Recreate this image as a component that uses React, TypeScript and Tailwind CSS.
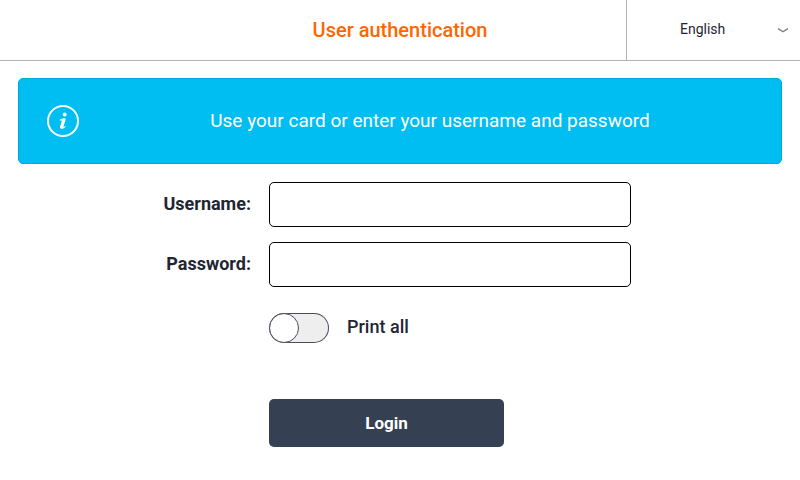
import React, { useState } from 'react';

interface FieldProps {
  id: string;
  label: string;
  type: string;
  value: string;
  onChange: (value: string) => void;
}

const Field: React.FC<FieldProps> = ({ id, label, type, value, onChange }) => (
  <div className="flex">
    <label htmlFor={id} className="w-[251px] pt-[8px] text-right text-[18px] leading-[27px] font-bold">
      {label}:
    </label>
    <input
      id={id}
      type={type}
      value={value}
      onChange={(e) => onChange(e.target.value)}
      className="ml-[18px] h-[45px] w-[362px] rounded-[5px] border border-black bg-white px-3 outline-none"
    />
  </div>
);

const InfoIcon = () => (
  <svg className="h-8 w-8 shrink-0" viewBox="0 0 32 32" fill="none">
    <circle cx="16" cy="16" r="15" stroke="#fff" strokeWidth="2" />
    <circle cx="17.7" cy="9.5" r="1.9" fill="#fff" />
    <path
      d="M12.7 14.7C14.2 13.9 15.9 13.3 17.3 13.3c1.1 0 1.5.7 1.2 1.7l-1.9 6.2c-.2.7.2.9.7.5l1.1-1 .5.5c-1.4 1.8-2.9 2.6-4.4 2.6-1.4 0-1.8-.9-1.4-2.2l1.6-5.2c.2-.7-.1-1-.7-.9l-1.3.1z"
      fill="#fff"
    />
  </svg>
);

const App: React.FC = () => {
  const [username, setUsername] = useState('');
  const [password, setPassword] = useState('');
  const [printAll, setPrintAll] = useState(false);

  return (
    <div className="h-[480px] w-[800px] overflow-hidden bg-white font-['Roboto',sans-serif] text-[#1f2633]">
      {/* Header */}
      <header className="flex h-[61px] border-b border-[#b3b3b3]">
        <h1 className="flex-1 pl-[174px] pt-[15px] text-center text-[20px] leading-[30px] font-medium text-[#ff6600]">
          User authentication
        </h1>
        <button className="flex w-[174px] items-center border-l border-[#b3b3b3] pr-[11px] pl-[53px] text-[14px]">
          <span className="flex-1 pb-[2px] text-left">English</span>
          <svg className="h-[6px] w-[12px]" viewBox="0 0 12 6" fill="none">
            <path d="M1 1.7Q3.5 3 6 4.7Q8.5 3 11 1.7" stroke="#7b7f8d" strokeWidth="1.3" />
          </svg>
        </button>
      </header>

      {/* Message */}
      <div className="mx-[18px] mt-[17px] flex h-[86px] items-center rounded-[5px] border border-[#00a9d6] bg-[#00bdf2] pl-[28px] text-white">
        <InfoIcon />
        <p className="flex-1 text-center text-[19px]">Use your card or enter your username and password</p>
      </div>

      {/* Login form */}
      <form className="mt-[18px]" onSubmit={(e) => e.preventDefault()}>
        <div className="space-y-[15px]">
          <Field id="username" label="Username" type="text" value={username} onChange={setUsername} />
          <Field id="password" label="Password" type="password" value={password} onChange={setPassword} />
        </div>

        <div className="mt-[26px] ml-[269px] flex">
          <button
            type="button"
            role="switch"
            aria-checked={printAll}
            aria-label="Print all"
            onClick={() => setPrintAll(!printAll)}
            className={`flex h-[30px] w-[60px] rounded-full bg-[#eeeeee] ring-1 ring-inset ring-[#4b4b5c] ${printAll ? 'justify-end' : ''}`}
          >
            <span className="h-[30px] w-[30px] rounded-full border border-[#4b4b5c] bg-white" />
          </button>
          <span className="ml-[18px] text-[18px] leading-[27px] font-medium">Print all</span>
        </div>

        <button
          type="submit"
          className="mt-[56px] ml-[269px] block h-[48px] w-[235px] rounded-[5px] bg-[#354052] pt-px text-[17px] leading-[27px] font-bold text-white"
        >
          Login
        </button>
      </form>
    </div>
  );
};

export default App;
